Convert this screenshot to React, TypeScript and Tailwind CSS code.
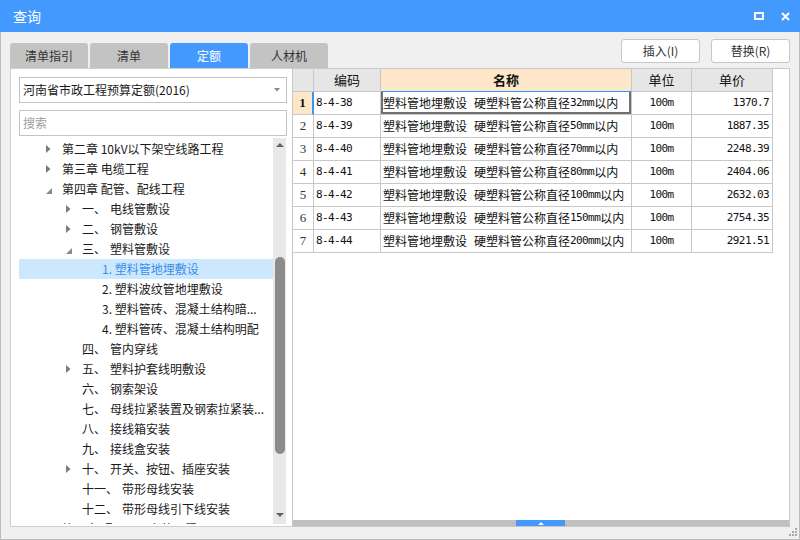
import React from "react";

type TreeNode = {
  level: number;
  arrow?: "open" | "closed";
  prefix?: string;
  label: string;
  selected?: boolean;
};

const treeNodes: TreeNode[] = [
  { level: 0, arrow: "closed", label: "第二章 10kV以下架空线路工程" },
  { level: 0, arrow: "closed", label: "第三章 电缆工程" },
  { level: 0, arrow: "open", label: "第四章 配管、配线工程" },
  { level: 1, arrow: "closed", prefix: "一、", label: "电线管敷设" },
  { level: 1, arrow: "closed", prefix: "二、", label: "钢管敷设" },
  { level: 1, arrow: "open", prefix: "三、", label: "塑料管敷设" },
  { level: 2, label: "1. 塑料管地埋敷设", selected: true },
  { level: 2, label: "2. 塑料波纹管地埋敷设" },
  { level: 2, label: "3. 塑料管砖、混凝土结构暗..." },
  { level: 2, label: "4. 塑料管砖、混凝土结构明配" },
  { level: 1, prefix: "四、", label: "管内穿线" },
  { level: 1, arrow: "closed", prefix: "五、", label: "塑料护套线明敷设" },
  { level: 1, prefix: "六、", label: "钢索架设" },
  { level: 1, prefix: "七、", label: "母线拉紧装置及钢索拉紧装..." },
  { level: 1, prefix: "八、", label: "接线箱安装" },
  { level: 1, prefix: "九、", label: "接线盒安装" },
  { level: 1, arrow: "closed", prefix: "十、", label: "开关、按钮、插座安装" },
  { level: 1, prefix: "十一、", label: "带形母线安装" },
  { level: 1, prefix: "十二、", label: "带形母线引下线安装" },
  { level: 0, arrow: "closed", label: "第五章 照明器具安装工程" },
];

const rows = [
  { code: "8-4-38", size: "32", price: "1370.7" },
  { code: "8-4-39", size: "50", price: "1887.35" },
  { code: "8-4-40", size: "70", price: "2248.39" },
  { code: "8-4-41", size: "80", price: "2404.06" },
  { code: "8-4-42", size: "100", price: "2632.03" },
  { code: "8-4-43", size: "150", price: "2754.35" },
  { code: "8-4-44", size: "200", price: "2921.51" },
];

const tabs = ["清单指引", "清单", "定额", "人材机"];

function Arrow({ type }: { type?: "open" | "closed" }) {
  if (type === "closed")
    return (
      <svg width="5" height="8" viewBox="0 0 5 8">
        <polygon points="0,0 4.5,4 0,8" fill="#7a7a7a" />
      </svg>
    );
  if (type === "open")
    return (
      <svg width="6" height="6" viewBox="0 0 6 6" className="mt-[3px]">
        <polygon points="6,0 6,6 0,6" fill="#8a8a8a" />
      </svg>
    );
  return null;
}

function TreeRow({ node }: { node: TreeNode }) {
  const pad = 24 + node.level * 20;
  return (
    <div
      className={`flex items-center h-[20px] shrink-0 whitespace-nowrap text-[12px] ${
        node.selected ? "bg-[#cce8ff] text-[#3a8ee6]" : "text-[#1a1a1a]"
      }`}
      style={{ paddingLeft: pad }}
    >
      <div className="w-[19px] h-full flex items-center pl-[3px]">
        <Arrow type={node.arrow} />
      </div>
      {node.prefix && <span>{node.prefix}</span>}
      <span className={node.prefix ? "ml-[4px]" : ""}>{node.label}</span>
    </div>
  );
}

export default function App() {
  return (
    <div className="w-[800px] h-[540px] flex flex-col font-['Noto_Sans_CJK_SC',sans-serif] select-none">
      {/* 标题栏 */}
      <div className="h-[32px] shrink-0 bg-[#4499ff] flex items-center pl-[13px] pr-[10px] text-white">
        <span className="text-[14px]">查询</span>
        <div className="ml-auto flex items-center gap-[17px]">
          <svg width="10" height="8" viewBox="0 0 10 8">
            <rect x="1" y="1" width="8" height="6" fill="none" stroke="#fff" strokeWidth="2" />
          </svg>
          <svg width="9" height="9" viewBox="0 0 9 9">
            <path d="M1 1 L8 8 M8 1 L1 8" stroke="#fff" strokeWidth="2" />
          </svg>
        </div>
      </div>

      <div className="flex-1 flex flex-col bg-[#f0f0f0] border-x border-b border-[#bdbdbd] relative">
        {/* 页签 + 按钮 */}
        <div className="h-[36px] shrink-0 flex px-[9px]">
          <div className="flex items-end gap-[2px]">
            {tabs.map((t) => (
              <div
                key={t}
                className={`w-[78px] h-[25px] rounded-t-[3px] flex items-center justify-center text-[12px] ${
                  t === "定额" ? "bg-[#4499ff] text-white" : "bg-[#c3c3c3] text-[#333]"
                }`}
              >
                {t}
              </div>
            ))}
          </div>
          <div className="ml-auto mt-[7px] flex gap-[11px] h-[24px]">
            <button className="w-[79px] h-[24px] bg-white border border-[#c8c8c8] rounded-[3px] text-[12px] text-[#333]">
              插入(I)
            </button>
            <button className="w-[79px] h-[24px] bg-white border border-[#c8c8c8] rounded-[3px] text-[12px] text-[#333]">
              替换(R)
            </button>
          </div>
        </div>

        {/* 内容 */}
        <div className="h-[459px] shrink-0 flex px-[9px]">
          {/* 左侧树 */}
          <div className="w-[282px] shrink-0 bg-white border-l border-y border-[#cfcfcf] flex flex-col pl-[8px] pt-[8px]">
            <div className="w-[268px] h-[26px] border border-[#c3c3c3] flex items-center pl-[3px] pr-[6px] text-[12px] text-[#1a1a1a]">
              <span>河南省市政工程预算定额(2016)</span>
              <svg width="6" height="4" viewBox="0 0 6 4" className="ml-auto">
                <polygon points="0,0 6,0 3,3.5" fill="#8a8a8a" />
              </svg>
            </div>
            <div className="w-[268px] h-[26px] mt-[7px] border border-[#c3c3c3] flex items-center pl-[3px] text-[12px] text-[#a0a0a0]">
              搜索
            </div>
            <div className="mt-[2px] h-[386px] flex overflow-hidden">
              <div className="w-[254px] shrink-0 flex flex-col pt-[1px] overflow-hidden">
                {treeNodes.map((n, i) => (
                  <TreeRow key={i} node={n} />
                ))}
              </div>
              <div className="w-[13px] h-full bg-[#e8e8e8] flex flex-col items-center">
                <div className="h-[14px] flex items-center">
                  <svg width="8" height="4" viewBox="0 0 8 4">
                    <polygon points="0,4 8,4 4,0" fill="#606070" />
                  </svg>
                </div>
                <div className="mt-[105px] w-[10px] h-[197px] rounded-full bg-[#8c8c8c]" />
                <div className="flex-1" />
                <div className="h-[11px] flex items-start">
                  <svg width="8" height="4" viewBox="0 0 8 4">
                    <polygon points="0,0 8,0 4,4" fill="#606070" />
                  </svg>
                </div>
              </div>
            </div>
          </div>

          {/* 右侧表格 */}
          <div className="flex-1 bg-white border border-[#c8c8c8] flex flex-col">
            <div className="grid grid-cols-[21px_67px_251px_60px_81px] w-max text-[#111]">
              <div className="h-[23px] bg-[#e6e6e6] border-r border-b border-[#c8c8c8]" />
              <div className="h-[23px] bg-[#e6e6e6] border-r border-b border-[#c8c8c8] flex items-center justify-center text-[13px]">
                编码
              </div>
              <div className="h-[23px] bg-[#fde7c8] border-r border-b border-b-[#3399ff] border-r-[#c8c8c8] flex items-center justify-center text-[13px] font-bold">
                名称
              </div>
              <div className="h-[23px] bg-[#e6e6e6] border-r border-b border-[#c8c8c8] flex items-center justify-center text-[13px]">
                单位
              </div>
              <div className="h-[23px] bg-[#e6e6e6] border-r border-b border-[#c8c8c8] flex items-center justify-center text-[13px]">
                单价
              </div>

              {rows.map((r, i) => {
                const first = i === 0;
                return (
                  <React.Fragment key={r.code}>
                    <div
                      className={`h-[23px] border-b border-[#c8c8c8] flex items-center justify-center font-['Liberation_Serif',serif] text-[13px] ${
                        first
                          ? "bg-[#fde7c8] font-bold border-r-2 border-r-[#3399ff]"
                          : "border-r text-[#333]"
                      }`}
                    >
                      {i + 1}
                    </div>
                    <div className="h-[23px] border-r border-b border-[#c8c8c8] flex items-center pl-[2px] font-['DejaVu_Sans_Mono',monospace] text-[11px] tracking-[-0.6px]">
                      {r.code}
                    </div>
                    <div
                      className={`h-[23px] border-r border-b border-[#c8c8c8] flex items-center pl-[2px] whitespace-pre text-[12px] ${
                        first ? "shadow-[inset_2px_0_0_#707070,inset_-2px_-2px_0_#707070]" : ""
                      }`}
                    >
                      <span>塑料管地埋敷设</span>
                      <span className="w-[7px]" />
                      <span>硬塑料管公称直径</span>
                      <span className="font-['DejaVu_Sans_Mono',monospace] text-[11px] tracking-[-0.6px]">
                        {r.size}mm
                      </span>
                      <span>以内</span>
                    </div>
                    <div className="h-[23px] border-r border-b border-[#c8c8c8] flex items-center justify-center font-['DejaVu_Sans_Mono',monospace] text-[11px] tracking-[-0.6px]">
                      100m
                    </div>
                    <div className="h-[23px] border-r border-b border-[#c8c8c8] flex items-center justify-end pr-[3px] font-['DejaVu_Sans_Mono',monospace] text-[11px] tracking-[-0.6px]">
                      {r.price}
                    </div>
                  </React.Fragment>
                );
              })}
            </div>
            <div className="flex-1" />
            <div className="h-[6px] bg-[#c0c0c0] flex">
              <div className="w-[223px]" />
              <div className="w-[49px] h-full bg-[#4499ff] flex items-center justify-center">
                <svg width="6" height="3" viewBox="0 0 6 3">
                  <polygon points="0,3 6,3 3,0" fill="#fff" />
                </svg>
              </div>
            </div>
          </div>
        </div>

        {/* 拖动角 */}
        <div className="absolute right-[2px] bottom-[3px] grid grid-cols-3 gap-[1px]">
          <span className="w-[2px] h-[2px]" />
          <span className="w-[2px] h-[2px]" />
          <span className="w-[2px] h-[2px] bg-[#a8a8a8]" />
          <span className="w-[2px] h-[2px]" />
          <span className="w-[2px] h-[2px] bg-[#a8a8a8]" />
          <span className="w-[2px] h-[2px] bg-[#a8a8a8]" />
          <span className="w-[2px] h-[2px] bg-[#a8a8a8]" />
          <span className="w-[2px] h-[2px] bg-[#a8a8a8]" />
          <span className="w-[2px] h-[2px] bg-[#a8a8a8]" />
        </div>
      </div>
    </div>
  );
}
